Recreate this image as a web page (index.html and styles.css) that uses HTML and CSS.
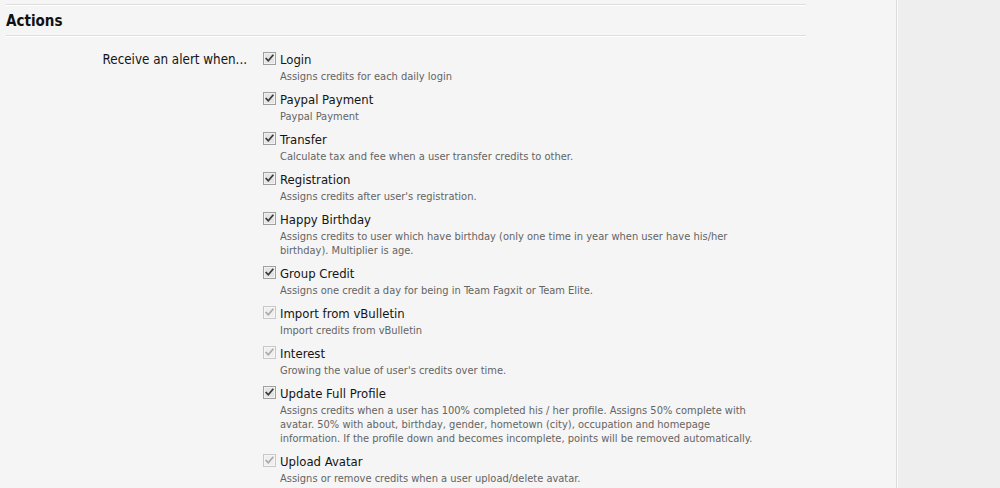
FILE: index.html
```html
<!DOCTYPE html>
<html>
<head>
<meta charset="utf-8">
<link rel="stylesheet" href="styles.css">
</head>
<body>
<div class="page">
  <main class="content">
    <section class="section">
      <h3 class="heading">Actions</h3>
      <dl class="ctrl">
        <dt class="ctrl-label">Receive an alert when...</dt>
        <dd class="ctrl-input">
          <ul class="opts">
            <li class="opt">
              <label class="opt-label"><span class="cb"><svg viewBox="0 0 13 13"><rect x="0.5" y="0.5" width="12" height="12" class="cb-box"/><rect x="1.5" y="1.5" width="10" height="10" class="cb-inner"/><path d="M3.2 6.6 L5.3 8.8 L9.8 3.4" class="cb-check"/></svg></span>Login</label>
              <p class="hint">Assigns credits for each daily login</p>
            </li>
            <li class="opt">
              <label class="opt-label"><span class="cb"><svg viewBox="0 0 13 13"><rect x="0.5" y="0.5" width="12" height="12" class="cb-box"/><rect x="1.5" y="1.5" width="10" height="10" class="cb-inner"/><path d="M3.2 6.6 L5.3 8.8 L9.8 3.4" class="cb-check"/></svg></span>Paypal Payment</label>
              <p class="hint">Paypal Payment</p>
            </li>
            <li class="opt">
              <label class="opt-label"><span class="cb"><svg viewBox="0 0 13 13"><rect x="0.5" y="0.5" width="12" height="12" class="cb-box"/><rect x="1.5" y="1.5" width="10" height="10" class="cb-inner"/><path d="M3.2 6.6 L5.3 8.8 L9.8 3.4" class="cb-check"/></svg></span>Transfer</label>
              <p class="hint">Calculate tax and fee when a user transfer credits to other.</p>
            </li>
            <li class="opt">
              <label class="opt-label"><span class="cb"><svg viewBox="0 0 13 13"><rect x="0.5" y="0.5" width="12" height="12" class="cb-box"/><rect x="1.5" y="1.5" width="10" height="10" class="cb-inner"/><path d="M3.2 6.6 L5.3 8.8 L9.8 3.4" class="cb-check"/></svg></span>Registration</label>
              <p class="hint">Assigns credits after user's registration.</p>
            </li>
            <li class="opt">
              <label class="opt-label"><span class="cb"><svg viewBox="0 0 13 13"><rect x="0.5" y="0.5" width="12" height="12" class="cb-box"/><rect x="1.5" y="1.5" width="10" height="10" class="cb-inner"/><path d="M3.2 6.6 L5.3 8.8 L9.8 3.4" class="cb-check"/></svg></span>Happy Birthday</label>
              <p class="hint">Assigns credits to user which have birthday (only one time in year when user have his/her birthday). Multiplier is age.</p>
            </li>
            <li class="opt">
              <label class="opt-label"><span class="cb"><svg viewBox="0 0 13 13"><rect x="0.5" y="0.5" width="12" height="12" class="cb-box"/><rect x="1.5" y="1.5" width="10" height="10" class="cb-inner"/><path d="M3.2 6.6 L5.3 8.8 L9.8 3.4" class="cb-check"/></svg></span>Group Credit</label>
              <p class="hint">Assigns one credit a day for being in Team Fagxit or Team Elite.</p>
            </li>
            <li class="opt">
              <label class="opt-label"><span class="cb cb-disabled"><svg viewBox="0 0 13 13"><rect x="0.5" y="0.5" width="12" height="12" class="cb-box"/><rect x="1.5" y="1.5" width="10" height="10" class="cb-inner"/><path d="M3.2 6.6 L5.3 8.8 L9.8 3.4" class="cb-check"/></svg></span>Import from vBulletin</label>
              <p class="hint">Import credits from vBulletin</p>
            </li>
            <li class="opt">
              <label class="opt-label"><span class="cb cb-disabled"><svg viewBox="0 0 13 13"><rect x="0.5" y="0.5" width="12" height="12" class="cb-box"/><rect x="1.5" y="1.5" width="10" height="10" class="cb-inner"/><path d="M3.2 6.6 L5.3 8.8 L9.8 3.4" class="cb-check"/></svg></span>Interest</label>
              <p class="hint">Growing the value of user's credits over time.</p>
            </li>
            <li class="opt">
              <label class="opt-label"><span class="cb"><svg viewBox="0 0 13 13"><rect x="0.5" y="0.5" width="12" height="12" class="cb-box"/><rect x="1.5" y="1.5" width="10" height="10" class="cb-inner"/><path d="M3.2 6.6 L5.3 8.8 L9.8 3.4" class="cb-check"/></svg></span>Update Full Profile</label>
              <p class="hint">Assigns credits when a user has 100% completed his / her profile. Assigns 50% complete with avatar. 50% with about, birthday, gender, hometown (city), occupation and homepage information. If the profile down and becomes incomplete, points will be removed automatically.</p>
            </li>
            <li class="opt">
              <label class="opt-label"><span class="cb cb-disabled"><svg viewBox="0 0 13 13"><rect x="0.5" y="0.5" width="12" height="12" class="cb-box"/><rect x="1.5" y="1.5" width="10" height="10" class="cb-inner"/><path d="M3.2 6.6 L5.3 8.8 L9.8 3.4" class="cb-check"/></svg></span>Upload Avatar</label>
              <p class="hint">Assigns or remove credits when a user upload/delete avatar.</p>
            </li>
          </ul>
        </dd>
      </dl>
    </section>
  </main>
  <aside class="side"></aside>
</div>
</body>
</html>
```
FILE: styles.css
```css
html, body {
  margin: 0;
  padding: 0;
  height: 100%;
  overflow: hidden;
}
body {
  font-family: "DejaVu Sans Condensed", "DejaVu Sans", sans-serif;
  color: #141414;
  background: #f5f5f5;
}
.page {
  display: flex;
  height: 488px;
}
.content {
  width: 896px;
  flex: none;
  padding-left: 6px;
  box-sizing: border-box;
  background: #f5f5f5;
}
.side {
  flex: 1;
  border-left: 1px solid #dcdcdc;
  box-shadow: inset 1px 0 0 #fafafa;
  background: #eeeeee;
}
.section {
  width: 800px;
  padding-top: 4px;
}
.heading {
  margin: 0;
  height: 29px;
  padding-top: 1px;
  line-height: 30px;
  font-size: 15px;
  font-weight: bold;
  color: #111;
  border-top: 1px solid #dedede;
  border-bottom: 1px solid #dedede;
  box-shadow: inset 0 1px 0 #fff, 0 1px 0 #fff;
}
.ctrl {
  display: flex;
  margin: 16px 0 0;
}
.ctrl-label {
  width: 241px;
  flex: none;
  text-align: right;
  font-size: 13.3px;
  line-height: 16px;
  color: #141414;
}
.ctrl-input {
  margin: 0 0 0 16px;
}
.opts {
  list-style: none;
  margin: 0;
  padding: 0;
  width: 500px;
}
.opt {
  margin-bottom: 8px;
}
.opt-label {
  display: flex;
  align-items: center;
  font-size: 13px;
  line-height: 16px;
  height: 16px;
}
.cb {
  width: 13px;
  height: 13px;
  margin-right: 4px;
  margin-top: -3px;
  display: block;
}
.cb svg {
  display: block;
  width: 13px;
  height: 13px;
}
.cb-box {
  fill: none;
  stroke: #a0a0a0;
  stroke-width: 1;
}
.cb-inner {
  fill: #e4e4e4;
  stroke: #f2f2f2;
  stroke-width: 1;
}
.cb-check {
  fill: none;
  stroke: #3a3a3a;
  stroke-width: 1.7;
  stroke-linecap: square;
}
.cb-disabled .cb-box {
  stroke: #c8c8c8;
}
.cb-disabled .cb-inner {
  fill: #efefef;
  stroke: #f6f6f6;
}
.cb-disabled .cb-check {
  stroke: #aaaaaa;
}
.hint {
  margin: 2px 0 0 17px;
  font-size: 11px;
  line-height: 14px;
  color: #646464;
  width: 480px;
}
```
